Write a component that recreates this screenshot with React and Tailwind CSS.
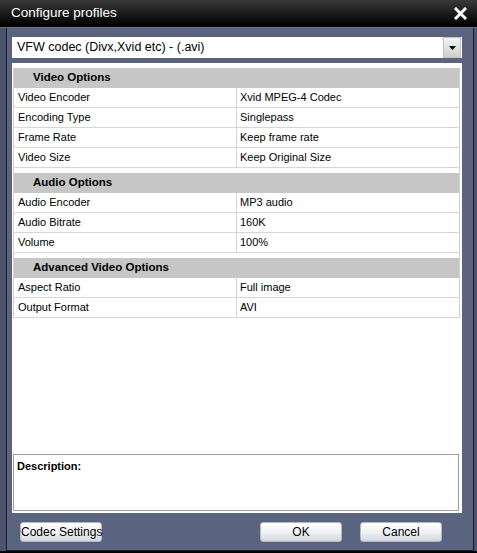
import React from "react";

const sections = [
  {
    title: "Video Options",
    rows: [
      ["Video Encoder", "Xvid MPEG-4 Codec"],
      ["Encoding Type", "Singlepass"],
      ["Frame Rate", "Keep frame rate"],
      ["Video Size", "Keep Original Size"],
    ],
  },
  {
    title: "Audio Options",
    rows: [
      ["Audio Encoder", "MP3 audio"],
      ["Audio Bitrate", "160K"],
      ["Volume", "100%"],
    ],
  },
  {
    title: "Advanced Video Options",
    rows: [
      ["Aspect Ratio", "Full image"],
      ["Output Format", "AVI"],
    ],
  },
];

function Button({ label, className }) {
  return (
    <button
      type="button"
      className={
        "h-[20px] w-[82px] px-0 whitespace-nowrap rounded-[3px] border border-[#b4b9c2] bg-gradient-to-b from-white via-[#f1f2f4] to-[#d3d7dd] text-[12px] text-black leading-none " +
        (className || "")
      }
    >
      {label}
    </button>
  );
}

export default function App() {
  return (
    <div className="w-[477px] h-[553px] bg-black flex flex-col overflow-hidden font-['Liberation_Sans',Arial,sans-serif]">
      {/* title bar */}
      <div className="h-[28px] flex items-center justify-between pl-[11px] pr-[10px] bg-gradient-to-b from-[#3a3a3a] via-[#1b1b1b] to-[#020202] border-b border-[#6a718a]">
        <span className="text-white text-[13.5px]">Configure profiles</span>
        <svg width="13" height="13" viewBox="0 0 13 13">
          <path d="M2 2 L11 11 M11 2 L2 11" stroke="white" strokeWidth="3" strokeLinecap="square" />
        </svg>
      </div>

      <div className="h-[523px] bg-[#4c546b] pl-[6px] pr-[3px]">
        <div className="h-full flex flex-col border-x border-b border-[#1a1e2b] bg-[#5a6380] pl-[5px] pr-[11px] pt-[9px]">
          {/* combo */}
          <div className="h-[21px] flex bg-white">
            <div className="flex-1 flex items-center pl-[5px] text-[12.5px] text-black">
              VFW codec (Divx,Xvid etc) - (.avi)
            </div>
            <div className="w-[18px] mr-[1px] flex items-center justify-center bg-gradient-to-b from-[#f4f4f4] to-[#cfcfcf] border border-[#c2c2c2]">
              <svg width="7" height="4" viewBox="0 0 7 4">
                <path d="M0 0 H7 L3.5 4 Z" fill="black" />
              </svg>
            </div>
          </div>

          {/* main panel */}
          <div className="mt-[5px] h-[450px] bg-white flex flex-col pl-[1px]">
            <div className="flex-1 pt-[5px]">
              <div className="w-[447px] border-x border-[#cfcfcf] text-[11px] text-black">
                {sections.map((s, i) => (
                  <div key={s.title} className={i > 0 ? "pt-[5px]" : ""}>
                    <div className="h-[20px] flex items-center bg-[#c6c6c6] pl-[19px] text-[11.5px] font-bold">
                      {s.title}
                    </div>
                    {s.rows.map(([k, v]) => (
                      <div key={k} className="h-[20px] flex border-b border-[#d6d6d6]">
                        <div className="w-[223px] flex items-center pl-[4px] border-r border-[#d6d6d6]">{k}</div>
                        <div className="flex-1 flex items-center pl-[3px]">{v}</div>
                      </div>
                    ))}
                  </div>
                ))}
              </div>
            </div>
            <div className="w-[446px] h-[57px] mb-[2px] border border-[#9e9e9e] pl-[3px] pt-[3px] text-[11px] font-bold text-black">
              Description:
            </div>
          </div>

          {/* buttons */}
          <div className="mt-[9px] flex pl-[8px] pr-[20px]">
            <Button label="Codec Settings" />
            <Button label="OK" className="ml-auto" />
            <Button label="Cancel" className="ml-[18px]" />
          </div>
        </div>
      </div>
    </div>
  );
}
